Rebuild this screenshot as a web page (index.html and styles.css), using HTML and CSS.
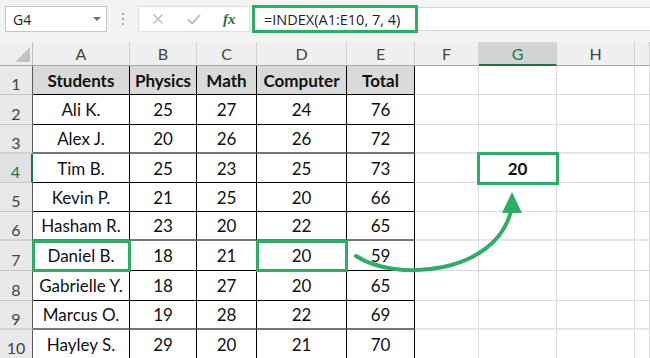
FILE: index.html
```html
<!DOCTYPE html>
<html>
<head>
    <title>INDEX</title>
    <link rel="stylesheet" href="styles.css">
</head>
<body>

<div class="toolbar">
    <div class="namebox">G4<span class="caret"></span></div>
    <div class="grip"><i></i><i></i><i></i></div>
    <div class="funcbox">
        <svg class="ico-x" width="10" height="10" viewBox="0 0 10 10"><path d="M0.5 0.5 L9.5 9.5 M9.5 0.5 L0.5 9.5" stroke="#b9b9b9" stroke-width="1.4" fill="none"/></svg>
        <svg class="ico-ok" width="14" height="11" viewBox="0 0 14 11"><path d="M1 5.5 L5 9.5 L13 1" stroke="#b9b9b9" stroke-width="1.8" fill="none"/></svg>
        <span class="fx">fx</span>
    </div>
    <div class="fbar">
        <div class="formula">=INDEX(A1:E10, 7, 4)</div>
        <div class="fbar-rest"></div>
    </div>
</div>

<div class="sheet">
    <!-- cabeçalho das colunas -->
    <div class="c ch corner"><svg width="15" height="15" viewBox="0 0 15 15"><polygon points="15,0 15,15 0,15" fill="#c2c2c2"/></svg></div>
    <div class="c ch">A</div>
    <div class="c ch">B</div>
    <div class="c ch">C</div>
    <div class="c ch">D</div>
    <div class="c ch">E</div>
    <div class="c ch">F</div>
    <div class="c ch on">G</div>
    <div class="c ch">H</div>
    <div class="c ch"></div>

    <div class="c rh">1</div>
    <div class="c t th">Students</div><div class="c t th">Physics</div><div class="c t th">Math</div><div class="c t th">Computer</div><div class="c t th">Total</div>
    <div class="c"></div><div class="c"></div><div class="c"></div><div class="c"></div>

    <div class="c rh">2</div>
    <div class="c t">Ali K.</div><div class="c t">25</div><div class="c t">27</div><div class="c t">24</div><div class="c t">76</div>
    <div class="c"></div><div class="c"></div><div class="c"></div><div class="c"></div>

    <div class="c rh brk">3</div>
    <div class="c t brk">Alex J.</div><div class="c t brk">20</div><div class="c t brk">26</div><div class="c t brk">26</div><div class="c t brk">72</div>
    <div class="c brk"></div><div class="c brk"></div><div class="c brk"></div><div class="c brk"></div>

    <div class="c rh on">4</div>
    <div class="c t">Tim B.</div><div class="c t">25</div><div class="c t">23</div><div class="c t">25</div><div class="c t">73</div>
    <div class="c"></div><div class="c pick wide result">20</div><div class="c"></div><div class="c"></div>

    <div class="c rh">5</div>
    <div class="c t">Kevin P.</div><div class="c t">21</div><div class="c t">25</div><div class="c t">20</div><div class="c t">66</div>
    <div class="c"></div><div class="c"></div><div class="c"></div><div class="c"></div>

    <div class="c rh brk">6</div>
    <div class="c t brk">Hasham R.</div><div class="c t brk">23</div><div class="c t brk">20</div><div class="c t brk">22</div><div class="c t brk">65</div>
    <div class="c brk"></div><div class="c brk"></div><div class="c brk"></div><div class="c brk"></div>

    <div class="c rh">7</div>
    <div class="c t pick">Daniel B.</div><div class="c t">18</div><div class="c t">21</div><div class="c t pick">20</div><div class="c t">59</div>
    <div class="c"></div><div class="c"></div><div class="c"></div><div class="c"></div>

    <div class="c rh">8</div>
    <div class="c t">Gabrielle Y.</div><div class="c t">18</div><div class="c t">27</div><div class="c t">20</div><div class="c t">65</div>
    <div class="c"></div><div class="c"></div><div class="c"></div><div class="c"></div>

    <div class="c rh brk">9</div>
    <div class="c t brk">Marcus O.</div><div class="c t brk">19</div><div class="c t brk">28</div><div class="c t brk">22</div><div class="c t brk">69</div>
    <div class="c brk"></div><div class="c brk"></div><div class="c brk"></div><div class="c brk"></div>

    <div class="c rh">10</div>
    <div class="c t">Hayley S.</div><div class="c t">29</div><div class="c t">20</div><div class="c t">21</div><div class="c t">70</div>
    <div class="c"></div><div class="c"></div><div class="c"></div><div class="c"></div>
</div>

<!-- seta de D7 para G4 -->
<svg class="arrow" width="650" height="358" viewBox="0 0 650 358">
    <path d="M356 256 C395 282 495 275 511 211" stroke="#2cae66" stroke-width="4" stroke-linecap="round" fill="none"/>
    <polygon points="512,192 502,213 522,213" fill="#2cae66"/>
</svg>

</body>
</html>
```

FILE: styles.css
```css
body {
    margin: 0;
    background-color: #fff;
    font-family: Lato, "Liberation Sans", sans-serif;
    color: #111;
    overflow: hidden;
}
.toolbar {
    height: 42px;
    background-color: #f3f3f3;
    display: flex;
    align-items: flex-start;
    font-family: "Open Sans", sans-serif;
}
.namebox {
    margin: 6px 0 0 5px;
    width: 102px;
    height: 26px;
    box-sizing: border-box;
    border: 1px solid #c6c6c6;
    background-color: #fff;
    display: flex;
    align-items: center;
    padding-left: 7px;
    font-size: 14px;
    color: #222;
}
.caret {
    margin-left: auto;
    margin-right: 5px;
    border-left: 4px solid transparent;
    border-right: 4px solid transparent;
    border-top: 4px solid #6d6d6d;
}
.grip {
    width: 31px;
    height: 38px;
    display: flex;
    flex-direction: column;
    align-items: center;
    justify-content: center;
    gap: 3px;
}
.grip i {
    width: 2px;
    height: 2px;
    background-color: #a8a8a8;
}
.funcbox {
    margin-top: 6px;
    width: 112px;
    height: 26px;
    box-sizing: border-box;
    border: 1px solid #dedede;
    background-color: #fff;
    display: flex;
    align-items: center;
    padding-left: 14px;
}
.ico-ok {
    margin-left: 24px;
}
.fx {
    margin-left: 22px;
    font-family: "Liberation Serif", serif;
    font-style: italic;
    font-weight: bold;
    font-size: 15px;
    color: #217346;
}
.fbar {
    flex: 1;
    margin: 5px 0 0 2px;
    display: flex;
    align-items: flex-start;
}
.formula {
    width: 166px;
    height: 28px;
    box-sizing: border-box;
    border: 3px solid #2cae66;
    background-color: #fff;
    padding-left: 9px;
    display: flex;
    align-items: center;
    font-size: 14.5px;
    color: #222;
}
.fbar-rest {
    flex: 1;
    margin-top: 2px;
    height: 24px;
    box-sizing: border-box;
    border-top: 1px solid #d5d5d5;
    border-bottom: 1px solid #d5d5d5;
    background-color: #fff;
}
.sheet {
    display: grid;
    grid-template-columns: 33px 97px 67px 60px 90px 68px 64px 78px 78px 1fr;
    grid-template-rows: 24px 29px 30px 29px 29px 29px 29px 30px 30px 29px 29px;
    font-size: 17px;
}
.c {
    box-sizing: border-box;
    border-right: 1px solid #dadada;
    border-bottom: 1px solid #dadada;
    display: flex;
    align-items: center;
    justify-content: center;
    white-space: nowrap;
}
.ch {
    background-color: #efefef;
    border-right-color: #d0d0d0;
    border-bottom-color: #a9a9a9;
    font-size: 16px;
    color: #444;
}
.ch.on {
    background-color: #d3d3d3;
    color: #217346;
    border-bottom: 2px solid #217346;
}
.corner {
    justify-content: flex-end;
    align-items: flex-start;
    padding: 5px 2px 0 0;
    border-right-color: #bdbdbd;
}
.corner svg {
    display: block;
}
.rh {
    background-color: #e9e9e9;
    border-right-color: #5a5a5a;
    border-bottom-color: #c6c6c6;
    font-size: 16px;
    color: #444;
    padding-top: 7px;
}
.rh.on {
    background-color: #e1e1e1;
    color: #217346;
    border-right: 2px solid #217346;
}
.t {
    border-right-color: #000;
    border-bottom-color: #000;
}
.th {
    background-color: #d9d9d9;
    font-weight: bold;
}
.brk {
    border-bottom-width: 2px;
    border-bottom-color: #e6e6e6;
}
.rh.brk {
    border-bottom-color: #d2d2d2;
}
.t.brk {
    border-bottom-color: #767676;
}
.pick {
    position: relative;
    z-index: 1;
    outline: 3px solid #2cae66;
    outline-offset: -2px;
}
.pick.wide {
    outline-offset: -1px;
}
.result {
    font-weight: bold;
}
.arrow {
    position: absolute;
    top: 0;
    left: 0;
    z-index: 2;
    pointer-events: none;
}
```
